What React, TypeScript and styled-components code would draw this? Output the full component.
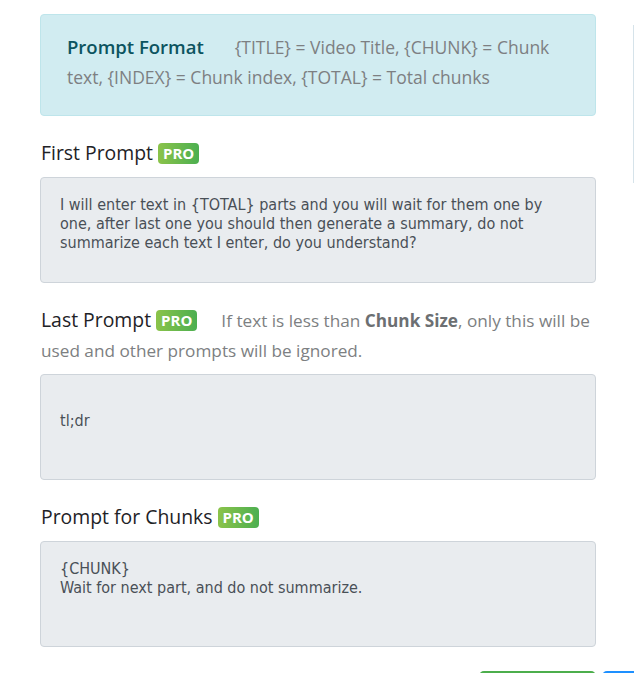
import React from "react";
import styled, { createGlobalStyle } from "styled-components";

const Global = createGlobalStyle`
  html, body { margin: 0; padding: 0; background: #fff; }
  body { font-family: "Open Sans", "Noto Sans", sans-serif; overflow: hidden; }
`;

const Page = styled.div`
  display: flex;
  align-items: flex-start;
  padding: 14px 0 0 40px;
  width: 634px;
  height: 673px;
  box-sizing: border-box;
  overflow: hidden;
`;

const Main = styled.div`
  width: 556px;
  flex: none;
  display: flex;
  flex-direction: column;
`;

const SidePanel = styled.div`
  flex: none;
  margin-left: 37px;
  margin-top: 11px;
  width: 10px;
  height: 158px;
  border-left: 1px solid #d6e3ea;
`;

const Alert = styled.div`
  background: #d1ecf1;
  border: 1px solid #bee5eb;
  border-radius: 4px;
  padding: 17px 26px 23px;
  font-size: 17.5px;
  line-height: 30px;
`;

const AlertTitle = styled.span`
  color: #0c5460;
  font-weight: 600;
  font-size: 18.5px;
  line-height: 1;
  margin-right: 31px;
`;

const Muted = styled.span`
  color: #7d7f82;
  font-size: 17.5px;
  b { font-weight: 700; color: #6c6f72; }
`;

const Group = styled.div`
  margin-top: 22px;
  display: flex;
  flex-direction: column;
  gap: 9px;
`;

const Label = styled.div`
  color: #1e2226;
  font-size: 19.4px;
  font-weight: 400;
  line-height: 30px;
  padding-left: 1px;
`;

const Badge = styled.span`
  display: inline-block;
  margin-left: 5px;
  padding: 0 5px;
  height: 21px;
  line-height: 21px;
  border-radius: 4px;
  background: linear-gradient(90deg, #8bc34a, #4caf50);
  color: #fff;
  font-size: 15px;
  font-weight: 700;
  vertical-align: 1px;
`;

const Hint = styled(Muted)`
  margin-left: 24px;
  font-size: 17.2px;
  line-height: 1;
`;

const Area = styled.textarea`
  display: block;
  width: 556px;
  height: 106px;
  box-sizing: border-box;
  margin: 0;
  padding: 17px 32px 17px 19px;
  background: #e9ecef;
  border: 1px solid #ced4da;
  border-radius: 4px;
  color: #495057;
  font-family: "DejaVu Sans Condensed", "DejaVu Sans", sans-serif;
  font-size: 16px;
  line-height: 19px;
  resize: none;
  overflow: hidden;
  outline: none;
`;

const Actions = styled.div`
  margin-top: 24px;
  display: flex;
  justify-content: flex-end;
  gap: 6px;
  margin-right: -46px;
`;

const Button = styled.button<{ $color: string }>`
  flex: none;
  height: 34px;
  width: ${(p) => (p.$color === "green" ? "117px" : "40px")};
  border-radius: 5px;
  border: 2px solid ${(p) => (p.$color === "green" ? "#4cae4c" : "#1e90ff")};
  background: ${(p) => (p.$color === "green" ? "#fff" : "#1e90ff")};
`;

const prompts = [
  {
    label: "First Prompt",
    value:
      "I will enter text in {TOTAL} parts and you will wait for them one by one, after last one you should then generate a summary, do not summarize each text I enter, do you understand?",
  },
  { label: "Last Prompt", hint: true, value: "\ntl;dr" },
  { label: "Prompt for Chunks", value: "{CHUNK}\nWait for next part, and do not summarize." },
];

export default function App() {
  return (
    <>
      <Global />
      <Page>
        <Main>
          <Alert>
            <AlertTitle>Prompt Format</AlertTitle>
            <Muted>
              {"{TITLE} = Video Title, {CHUNK} = Chunk text, {INDEX} = Chunk index, {TOTAL} = Total chunks"}
            </Muted>
          </Alert>
          {prompts.map((p) => (
            <Group key={p.label}>
              <Label>
                {p.label}
                <Badge>PRO</Badge>
                {p.hint && (
                  <Hint>
                    If text is less than <b>Chunk Size</b>, only this will be used and other prompts will be
                    ignored.
                  </Hint>
                )}
              </Label>
              <Area readOnly value={p.value} />
            </Group>
          ))}
          <Actions>
            <Button $color="green" />
            <Button $color="blue" />
          </Actions>
        </Main>
        <SidePanel />
      </Page>
    </>
  );
}
